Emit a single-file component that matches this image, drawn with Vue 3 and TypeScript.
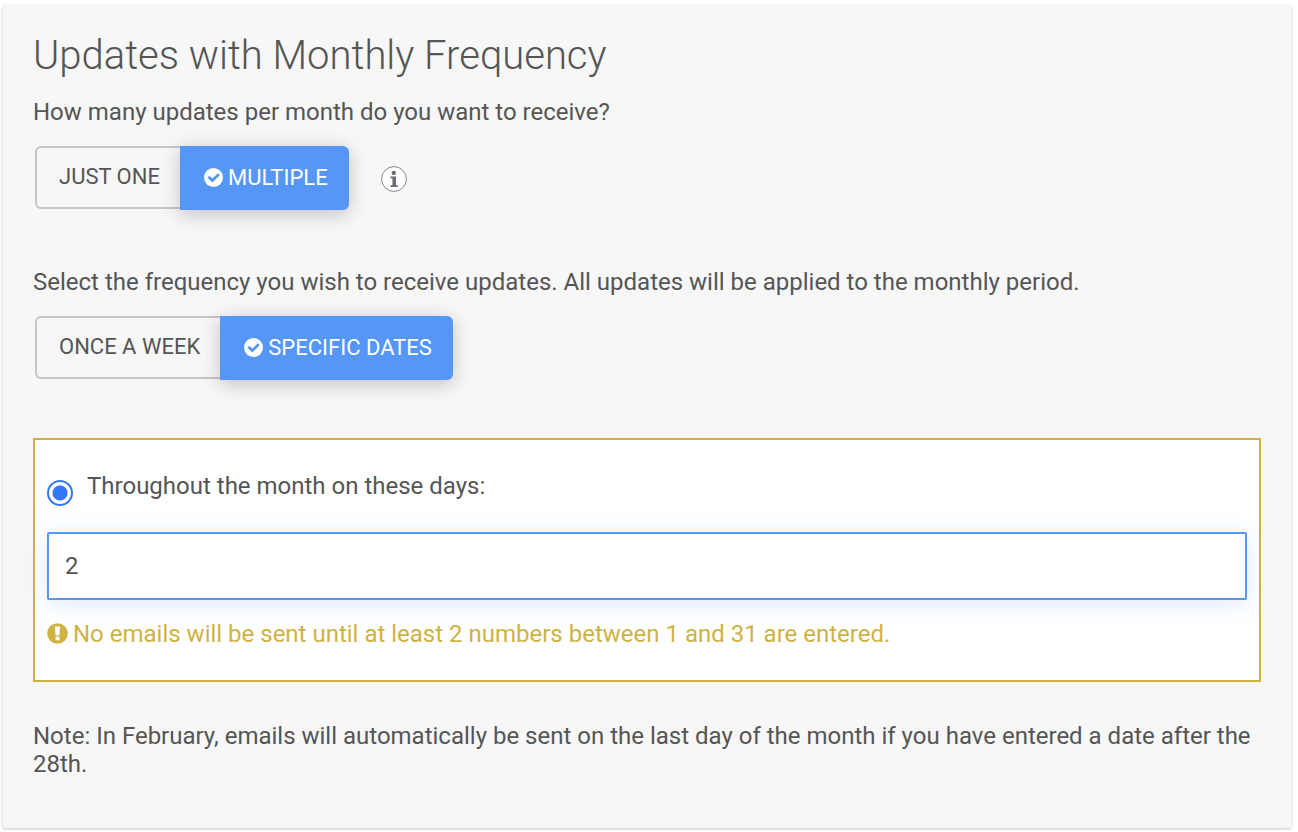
<script setup lang="ts">
import { ref } from 'vue'

interface Option {
  value: string
  label: string
}

const countOptions: Option[] = [
  { value: 'one', label: 'Just one' },
  { value: 'multiple', label: 'Multiple' },
]
const frequencyOptions: Option[] = [
  { value: 'weekly', label: 'Once a week' },
  { value: 'dates', label: 'Specific dates' },
]

const count = ref('multiple')
const frequency = ref('dates')
const mode = ref('throughout')
const days = ref('2')
</script>

<template>
  <main class="card">
    <h1 class="title">Updates with Monthly Frequency</h1>

    <section class="question">
      <p id="count-text" class="text">How many updates per month do you want to receive?</p>
      <div class="row">
        <div class="group" role="group" aria-labelledby="count-text">
          <button
            v-for="o in countOptions"
            :key="o.value"
            type="button"
            class="option"
            :class="{ active: count === o.value }"
            :aria-pressed="count === o.value"
            @click="count = o.value"
          >
            <svg v-if="count === o.value" class="check" viewBox="0 0 20 20" aria-hidden="true">
              <circle cx="10" cy="10" r="10" fill="#fff" />
              <path d="M4.7 9.2 8.8 13.2 15.6 6.6" fill="none" stroke="#5596f6" stroke-width="2.9" />
            </svg>
            <span>{{ o.label }}</span>
          </button>
        </div>
        <button type="button" class="info" aria-label="More information">
          <svg viewBox="0 0 26 26" aria-hidden="true">
            <circle cx="13" cy="13" r="12.4" fill="#fff" stroke="#85868b" stroke-width="1" />
            <circle cx="12.8" cy="6.9" r="2.2" fill="#6b6e76" />
            <path d="M9.4 10.5h5.6v8.8h1.8v1.7H9.4v-1.7h2v-7.1h-2z" fill="#6b6e76" />
          </svg>
        </button>
      </div>
    </section>

    <section class="question">
      <p id="frequency-text" class="text">
        Select the frequency you wish to receive updates. All updates will be applied to the monthly period.
      </p>
      <div class="row">
        <div class="group" role="group" aria-labelledby="frequency-text">
          <button
            v-for="o in frequencyOptions"
            :key="o.value"
            type="button"
            class="option"
            :class="{ active: frequency === o.value }"
            :aria-pressed="frequency === o.value"
            @click="frequency = o.value"
          >
            <svg v-if="frequency === o.value" class="check" viewBox="0 0 20 20" aria-hidden="true">
              <circle cx="10" cy="10" r="10" fill="#fff" />
              <path d="M4.7 9.2 8.8 13.2 15.6 6.6" fill="none" stroke="#5596f6" stroke-width="2.9" />
            </svg>
            <span>{{ o.label }}</span>
          </button>
        </div>
      </div>
    </section>

    <section class="panel">
      <div class="choice">
        <input id="throughout" v-model="mode" class="radio" type="radio" name="mode" value="throughout" />
        <label id="days-label" for="throughout" class="text">Throughout the month on these days:</label>
      </div>
      <input v-model="days" class="days" type="text" aria-labelledby="days-label" aria-describedby="warning" />
      <p id="warning" class="text warning">
        <svg class="alert" viewBox="0 0 21 21" aria-hidden="true">
          <circle cx="10.5" cy="10.5" r="10.3" fill="#cfb242" />
          <path d="M8 3.4h5l-.5 9H8.5z" fill="#fff" />
          <rect x="8.5" y="13.8" width="4" height="3.5" rx=".6" fill="#fff" />
        </svg>
        <span>No emails will be sent until at least 2 numbers between 1 and 31 are entered.</span>
      </p>
    </section>

    <p class="text">
      Note: In February, emails will automatically be sent on the last day of the month if you have entered a date
      after the 28th.
    </p>
  </main>
</template>

<style>
body {
  margin: 0;
  background: #fff;
}
</style>

<style scoped>
.card {
  box-sizing: border-box;
  margin: 4px 5px 0 1px;
  padding: 26px 30px 50px;
  background: #f7f7f7;
  border: 2px solid #eeeeee;
  border-top: 0;
  border-bottom-color: #e2e2e2;
  border-radius: 6px;
  box-shadow: 0 2px 1px #f5f5f5;
  color: #555;
  font-family: Roboto, 'Liberation Sans', sans-serif;
}

.title {
  margin: 0 0 16px;
  font-size: 40px;
  line-height: 52px;
  font-weight: 300;
}

.text {
  margin: 0;
  font-size: 24px;
  line-height: 28px;
}

.question {
  margin-bottom: 58px;
}

.row {
  display: flex;
  align-items: flex-start;
  gap: 32px;
  margin-top: 20px;
  padding-left: 2px;
}

.group {
  display: flex;
  align-items: flex-start;
}

.option {
  box-sizing: border-box;
  display: flex;
  align-items: center;
  gap: 5px;
  height: 63px;
  margin: 0;
  padding: 0 20px 2px 22px;
  border: 2px solid #c6c6c6;
  background: transparent;
  color: #555;
  font-family: inherit;
  font-size: 22px;
  line-height: 26px;
  text-transform: uppercase;
  white-space: nowrap;
  cursor: pointer;
}

.option:first-child {
  border-right: 0;
  border-radius: 6px 0 0 6px;
}

.option:last-child {
  border-left: 0;
  border-radius: 0 6px 6px 0;
}

.option.active {
  height: 64px;
  padding: 0 21px 0 24px;
  border: 0;
  background: #5596f6;
  color: #fff;
  box-shadow: 0 4px 20px rgba(0, 0, 0, 0.22);
}

.check,
.alert {
  flex: none;
  margin-bottom: 2px;
}

.check {
  width: 19px;
  height: 19px;
}

.alert {
  width: 21px;
  height: 21px;
}

.info {
  width: 26px;
  height: 26px;
  margin-top: 20px;
  padding: 0;
  border: 0;
  border-radius: 50%;
  background: none;
  cursor: pointer;
}

.info svg {
  display: block;
  width: 26px;
  height: 26px;
}

.panel {
  margin-bottom: 40px;
  padding: 32px 12px;
  border: 2px solid #cfb242;
  background: #fff;
}

.choice {
  display: flex;
  align-items: flex-start;
  gap: 14px;
  margin-bottom: 26px;
}

.radio {
  box-sizing: border-box;
  flex: none;
  appearance: none;
  width: 26px;
  height: 26px;
  margin: 8px 0 0;
  border: 2px solid #3478f6;
  border-radius: 50%;
  background: #fff;
}

.radio:checked {
  background: radial-gradient(circle, #3478f6 0 7px, #fff 8px);
}

.days {
  box-sizing: border-box;
  display: block;
  width: 100%;
  height: 68px;
  padding: 0 16px;
  border: 2px solid #5596f6;
  border-radius: 2px;
  outline: 0;
  background: #fff;
  box-shadow: 0 4px 24px rgba(85, 150, 246, 0.2);
  color: #555;
  font-family: inherit;
  font-size: 24px;
  line-height: 28px;
}

.warning {
  display: flex;
  align-items: center;
  gap: 5px;
  margin-top: 20px;
  color: #cfb242;
}
</style>
